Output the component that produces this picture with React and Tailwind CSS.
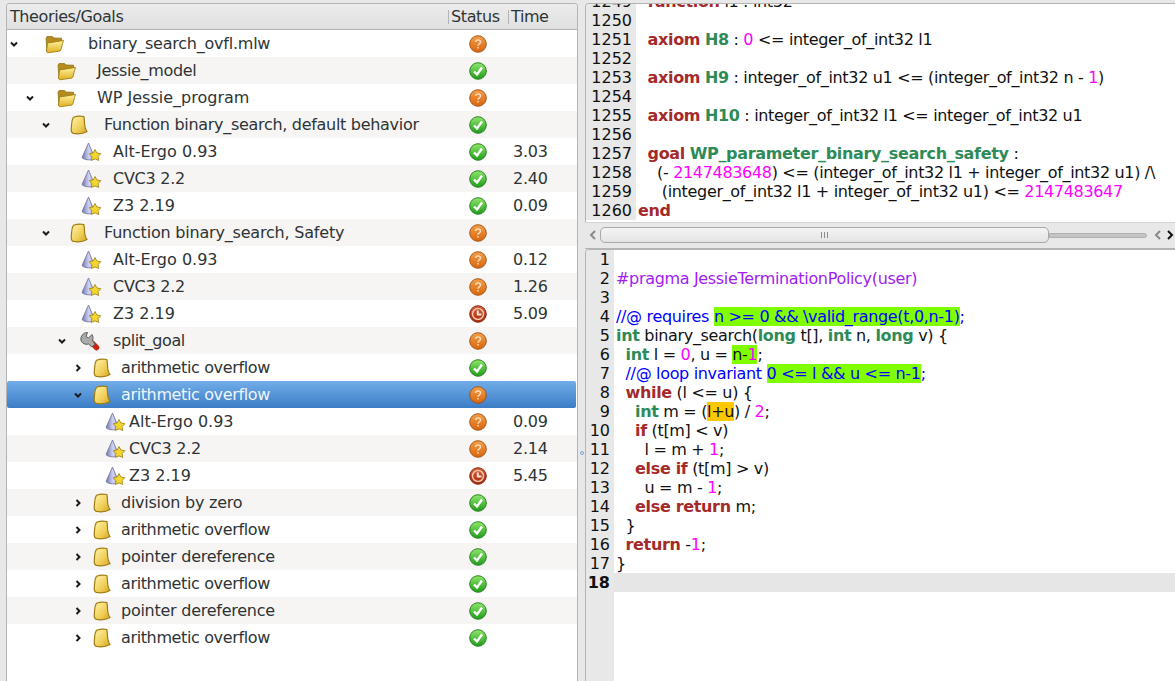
import { useId } from 'react'

const levels = {
  file: { pad: 'pl-[3px]', iconGap: 'ml-[24px]', textGap: 'ml-[22px]' },
  model: { pad: 'pl-[19px]', iconGap: 'ml-[20px]', textGap: 'ml-[19px]' },
  func: { pad: 'pl-[35px]', iconGap: 'ml-[17px]', textGap: 'ml-[13px]' },
  prover: { pad: 'pl-[51px]', iconGap: 'ml-[13px]', textGap: 'ml-[10px]' },
  split: { pad: 'pl-[51px]', iconGap: 'ml-[12px]', textGap: 'ml-[11px]' },
  goal: { pad: 'pl-[67px]', iconGap: 'ml-[8px]', textGap: 'ml-[7px]' },
  sub: { pad: 'pl-[83px]', iconGap: 'ml-[5px]', textGap: 'ml-[2px]' },
}

// the screenshot has hinted glyphs, a bit narrower than ours
const tracks = {
  'binary_search_ovfl.mlw': 'tracking-[-0.23px]',
  'Jessie_model': 'tracking-[-0.33px]',
  'Function binary_search, default behavior': 'tracking-[-0.3px]',
  'Function binary_search, Safety': 'tracking-[-0.2px]',
  'split_goal': 'tracking-[-0.4px]',
  'arithmetic overflow': 'tracking-[-0.37px]',
  'division by zero': 'tracking-[-0.25px]',
  'pointer dereference': 'tracking-[-0.26px]',
  'CVC3 2.2': 'tracking-[-0.25px]',
}

const rows = [
  { level: 'file', chev: 'down', icon: 'folder', label: 'binary_search_ovfl.mlw', status: 'q' },
  { level: 'model', icon: 'folder', label: 'Jessie_model', status: 'ok' },
  { level: 'model', chev: 'down', icon: 'folder', label: 'WP Jessie_program', status: 'q' },
  { level: 'func', chev: 'down', icon: 'book', label: 'Function binary_search, default behavior', status: 'ok' },
  { level: 'prover', icon: 'prover', label: 'Alt-Ergo 0.93', status: 'ok', time: '3.03' },
  { level: 'prover', icon: 'prover', label: 'CVC3 2.2', status: 'ok', time: '2.40' },
  { level: 'prover', icon: 'prover', label: 'Z3 2.19', status: 'ok', time: '0.09' },
  { level: 'func', chev: 'down', icon: 'book', label: 'Function binary_search, Safety', status: 'q' },
  { level: 'prover', icon: 'prover', label: 'Alt-Ergo 0.93', status: 'q', time: '0.12' },
  { level: 'prover', icon: 'prover', label: 'CVC3 2.2', status: 'q', time: '1.26' },
  { level: 'prover', icon: 'prover', label: 'Z3 2.19', status: 'clock', time: '5.09' },
  { level: 'split', chev: 'down', icon: 'wrench', label: 'split_goal', status: 'q' },
  { level: 'goal', chev: 'right', icon: 'book', label: 'arithmetic overflow', status: 'ok' },
  { level: 'goal', chev: 'down', icon: 'book', label: 'arithmetic overflow', status: 'q', selected: true },
  { level: 'sub', icon: 'prover', label: 'Alt-Ergo 0.93', status: 'q', time: '0.09' },
  { level: 'sub', icon: 'prover', label: 'CVC3 2.2', status: 'q', time: '2.14' },
  { level: 'sub', icon: 'prover', label: 'Z3 2.19', status: 'clock', time: '5.45' },
  { level: 'goal', chev: 'right', icon: 'book', label: 'division by zero', status: 'ok' },
  { level: 'goal', chev: 'right', icon: 'book', label: 'arithmetic overflow', status: 'ok' },
  { level: 'goal', chev: 'right', icon: 'book', label: 'pointer dereference', status: 'ok' },
  { level: 'goal', chev: 'right', icon: 'book', label: 'arithmetic overflow', status: 'ok' },
  { level: 'goal', chev: 'right', icon: 'book', label: 'pointer dereference', status: 'ok' },
  { level: 'goal', chev: 'right', icon: 'book', label: 'arithmetic overflow', status: 'ok' },
]

function Chevron({ dir }) {
  if (!dir) return <span className="w-2 shrink-0" />
  return (
    <svg className="w-2 h-2 shrink-0" viewBox="0 0 8 8" fill="none" stroke="#1a1a1a" strokeWidth="2">
      {dir === 'down' ? <path d="M1 2.5 4 5.5 7 2.5" /> : <path d="M2.5 1 5.5 4 2.5 7" />}
    </svg>
  )
}

function FolderIcon() {
  const id = useId()
  return (
    <svg width="24" height="20" viewBox="0 0 24 20">
      <defs>
        <linearGradient id={id} x1="0" y1="0" x2="0" y2="1">
          <stop offset="0" stopColor="#fff3a0" />
          <stop offset="1" stopColor="#e0b020" />
        </linearGradient>
      </defs>
      <path d="M4 4.500 5 2.500h5.500l1.500 1.500 7.500.2.500 3-14 2L5 18z" fill="#b58c1c" stroke="#8a6a10" strokeWidth=".7" />
      <path d="M5.500 9 21.500 6.500 20.500 9.500 19 15.500 18 17 6 18.800 4.500 17.500z" fill={`url(#${id})`} stroke="#a57f14" strokeWidth=".9" />
    </svg>
  )
}

function BookIcon() {
  const id = useId()
  return (
    <svg width="24" height="20" viewBox="0 0 24 20">
      <defs>
        <linearGradient id={id} x1="0" y1="0" x2="1" y2="1">
          <stop offset="0" stopColor="#fff4a8" />
          <stop offset=".6" stopColor="#f0ce58" />
          <stop offset="1" stopColor="#d2a41e" />
        </linearGradient>
      </defs>
      <path d="M6.500 2.200C9.500 1.200 14 1 16.800 1.500 17.800 5 17.200 8 17.800 11 18.200 13.500 19 15 20 16.500 16 18.800 10 19 6.500 18.300 4.500 17.800 4 16 4.300 13.500 4.800 9.500 4 6 6.500 2.200z" fill={`url(#${id})`} stroke="#a07d14" strokeWidth="1.200" />
    </svg>
  )
}

function ProverIcon() {
  const id = useId()
  return (
    <svg width="24" height="20" viewBox="0 0 24 20">
      <defs>
        <linearGradient id={id} x1="0" y1="0" x2="1" y2="0">
          <stop offset="0" stopColor="#6f74b0" />
          <stop offset=".55" stopColor="#d2d5f4" />
          <stop offset="1" stopColor="#9094cc" />
        </linearGradient>
      </defs>
      <path d="M9.500 1 3 15.500C4.500 18 13 18.800 16 16.500z" fill={`url(#${id})`} stroke="#6d7095" strokeWidth=".8" />
      <path d="M16 7.500 17.900 11 21.800 11.700 19.100 14.500 19.600 18.500 16 16.800 12.400 18.500 12.900 14.500 10.200 11.700 14.100 11z" fill="#f5d630" stroke="#a58a1a" strokeWidth=".9" />
    </svg>
  )
}

function WrenchIcon() {
  return (
    <svg width="24" height="20" viewBox="0 0 24 20">
      <path d="M13 11 18.500 16.500" stroke="#c4260f" strokeWidth="5.500" strokeLinecap="round" />
      <path d="M9.500 1.500A6.500 6.500 0 0 0 3 9.500 6 6 0 0 0 10.500 13L14 16 17 13 14.500 9.500A6 6 0 0 0 14 3.500L10.500 7 8 5.500z" fill="#ababab" stroke="#5e5e5e" strokeWidth="1" />
    </svg>
  )
}

function StatusIcon({ kind }) {
  const id = useId()
  const colors = {
    ok: ['#8fe86c', '#1f9a1a', '#1b7a16'],
    q: ['#f4a04c', '#d8650c', '#a04c0c'],
    clock: ['#d8603c', '#a82408', '#80200a'],
  }[kind]
  return (
    <svg width="18" height="18" viewBox="0 0 18 18">
      <defs>
        <linearGradient id={id} x1="0" y1="0" x2="0" y2="1">
          <stop offset="0" stopColor={colors[0]} />
          <stop offset="1" stopColor={colors[1]} />
        </linearGradient>
      </defs>
      <circle cx="9" cy="9" r="8.300" fill={`url(#${id})`} stroke={colors[2]} strokeWidth=".9" />
      {kind === 'ok' && <path d="M5 9.500 8 12.500 13 5.500" fill="none" stroke="#fff" strokeWidth="2.400" />}
      {kind === 'q' && (
        <g fill="none" stroke="#fbdcb8" strokeWidth="1.500">
          <path d="M6.700 7c0-2.800 4.800-2.800 4.800 0 0 1.900-2.500 1.700-2.500 3.800" />
          <path d="M9 12v1.500" />
        </g>
      )}
      {kind === 'clock' && (
        <g fill="none">
          <circle cx="9" cy="9" r="5.500" stroke="#f3c4a8" strokeWidth="1.500" />
          <path d="M8.800 5.500V9.500H12.500" stroke="#f9e4d6" strokeWidth="2" />
        </g>
      )}
    </svg>
  )
}

const icons = { folder: FolderIcon, book: BookIcon, prover: ProverIcon, wrench: WrenchIcon }

function TreeRow({ row, index }) {
  const lvl = levels[row.level]
  const Icon = icons[row.icon]
  let bg = index % 2 === 1 ? 'bg-[#f6f5f4]' : 'bg-white'
  if (row.selected) bg = 'mr-px rounded-[2px] bg-gradient-to-b from-[#72ade9] to-[#3b7dc5] text-[#eef5fc]'
  return (
    <div className={`flex items-center h-[27px] ${bg}`}>
      <div className={`w-[443px] flex items-center ${lvl.pad}`}>
        <Chevron dir={row.chev} />
        <span className={`flex ${lvl.iconGap}`}><Icon /></span>
        <span className={`whitespace-pre ${lvl.textGap} ${tracks[row.label] || ''}`}>{row.label}</span>
      </div>
      <div className="w-[60px] flex pl-[19px]"><StatusIcon kind={row.status} /></div>
      <div className="pl-[3px] tracking-[-0.25px]">{row.time}</div>
    </div>
  )
}

function HeaderCell({ className, children }) {
  return (
    <div className={`flex items-center h-full ${className}`}>
      <span className="w-px h-[14px] bg-[#b5b5b5] mr-[2px]" />
      {children}
    </div>
  )
}

const K = ({ children }) => <span className="font-bold text-[#a52a2a]">{children}</span>
const G = ({ children }) => <span className="font-bold text-[#2e8b57]">{children}</span>
const N = ({ children }) => <span className="text-[#ff00ff]">{children}</span>
const C = ({ children }) => <span className="text-[#0000ff]">{children}</span>
const H = ({ children }) => <span className="bg-[#7fff00]">{children}</span>

const topLines = [
  [1249, <>  <K>function</K> l1 : int32</>],
  [1250, ''],
  [1251, <>  <K>axiom</K> <G>H8</G> : <N>0</N> {'<='} integer_of_int32 l1</>],
  [1252, ''],
  [1253, <>  <K>axiom</K> <G>H9</G> : integer_of_int32 u1 {'<='} (integer_of_int32 n - <N>1</N>)</>],
  [1254, ''],
  [1255, <>  <K>axiom</K> <G>H10</G> : integer_of_int32 l1 {'<='} integer_of_int32 u1</>],
  [1256, ''],
  [1257, <>  <K>goal</K> <G>WP_parameter_binary_search_safety</G> :</>],
  [1258, <>    (- <N>2147483648</N>) {'<='} (integer_of_int32 l1 + integer_of_int32 u1) /\</>],
  [1259, <>     (integer_of_int32 l1 + integer_of_int32 u1) {'<='} <N>2147483647</N></>],
  [1260, <K>end</K>],
]

const bottomLines = [
  '',
  <span className="text-[#a020f0]">#pragma JessieTerminationPolicy(user)</span>,
  '',
  <><C>//@ requires </C><H><C>n {'>'}= 0 &amp;&amp; \valid_range(t,0,n-1)</C></H><C>;</C></>,
  <><G>int</G> binary_search(<G>long</G> t[], <G>int</G> n, <G>long</G> v) {'{'}</>,
  <>  <G>int</G> l = <N>0</N>, u = <H>n-<N>1</N></H>;</>,
  <>  <C>//@ loop invariant </C><H><C>0 {'<='} l &amp;&amp; u {'<='} n-1</C></H><C>;</C></>,
  <>  <K>while</K> (l {'<='} u) {'{'}</>,
  <>    <G>int</G> m = (<span className="bg-[#ffc800]">l+u</span>) / <N>2</N>;</>,
  <>    <K>if</K> (t[m] {'<'} v)</>,
  <>      l = m + <N>1</N>;</>,
  <>    <K>else if</K> (t[m] {'>'} v)</>,
  <>      u = m - <N>1</N>;</>,
  <>    <K>else return</K> m;</>,
  <>  {'}'}</>,
  <>  <K>return</K> -<N>1</N>;</>,
  '}',
  '',
]

function CodeLine({ num, gutter, current, children }) {
  return (
    <div className="flex h-[19px] leading-[19px]">
      <div className={`shrink-0 text-right pr-[4px] bg-[#e8e8e8] ${gutter} ${current ? 'font-bold' : ''}`}>{num}</div>
      <div className={`flex-1 whitespace-pre pl-[2px] tracking-[-0.33px] ${current ? 'bg-[#e6e6e6]' : ''}`}>{children}</div>
    </div>
  )
}

export default function App() {
  return (
    <div className="flex w-[1175px] h-[681px] overflow-hidden bg-[#e8e8e8] text-[16px] text-[#2e3436] font-['DejaVu_Sans',sans-serif]">
      <div className="w-[6px]" />
      <div className="w-[572px] mt-[3px] border-x border-t border-[#b4b4b4] rounded-t-[4px] overflow-hidden bg-white">
        <div className="flex items-center h-[26px] bg-gradient-to-b from-[#ececec] to-[#e0e0e0] border-b border-[#b4b4b4] tracking-[-0.4px]">
          <div className="w-[441px] pl-[3px]">Theories/Goals</div>
          <HeaderCell className="w-[60px]">Status</HeaderCell>
          <HeaderCell className="flex-1">Time</HeaderCell>
        </div>
        {rows.map((row, i) => <TreeRow key={i} row={row} index={i} />)}
      </div>

      <div className="w-[7px] flex items-center justify-center">
        <span className="w-[4px] h-[4px] rounded-full border border-[#7ea6d6] mt-[225px]" />
      </div>

      <div className="flex-1 flex flex-col min-w-0">
        <div className="h-[219px] mt-[3px] border-l border-t border-[#b4b4b4] rounded-tl-[4px] bg-white overflow-hidden text-[#111]">
          <div className="-mt-[12px]">
            {topLines.map(([n, code]) => <CodeLine key={n} num={n} gutter="w-[50px]">{code}</CodeLine>)}
          </div>
        </div>

        <div className="h-[27px] flex items-start border-b border-[#b4b4b4] pt-[4px] border-t border-t-[#d4d4d4]">
          <svg className="w-[8px] h-[10px] ml-[4px] mt-[3px] shrink-0" viewBox="0 0 8 10" fill="none" stroke="#8a8a8a" strokeWidth="2"><path d="M6 1 2 5 6 9" /></svg>
          <div className="flex w-[550px] ml-[3px] items-center h-[16px]">
            <div className="w-[449px] h-[16px] rounded-[5px] border border-[#a8a8a8] bg-gradient-to-b from-[#f4f4f4] to-[#e4e4e4] flex items-center justify-center gap-[2px]">
              <span className="w-px h-[6px] bg-[#8c8c8c]" />
              <span className="w-px h-[6px] bg-[#8c8c8c]" />
              <span className="w-px h-[6px] bg-[#8c8c8c]" />
            </div>
            <div className="w-[98px] h-[5px] rounded-r-[3px] bg-[#c4c4c4] border border-[#b0b0b0]" />
          </div>
          <svg className="w-[8px] h-[10px] ml-[4px] mt-[3px] shrink-0" viewBox="0 0 8 10" fill="none" stroke="#8a8a8a" strokeWidth="2"><path d="M6 1 2 5 6 9" /></svg>
          <svg className="w-[8px] h-[10px] ml-[4px] mt-[3px] shrink-0" viewBox="0 0 8 10" fill="none" stroke="#111" strokeWidth="2"><path d="M2 1 6 5 2 9" /></svg>
        </div>

        <div className="flex-1 border-l border-t border-[#b4b4b4] rounded-tl-[4px] overflow-hidden flex flex-col bg-white text-[#111]">
          <div>
            {bottomLines.map((code, i) => (
              <CodeLine key={i} num={i + 1} gutter="w-[28px]" current={i === 17}>{code}</CodeLine>
            ))}
          </div>
          <div className="flex-1 w-[28px] bg-[#e8e8e8]" />
        </div>
      </div>
    </div>
  )
}
